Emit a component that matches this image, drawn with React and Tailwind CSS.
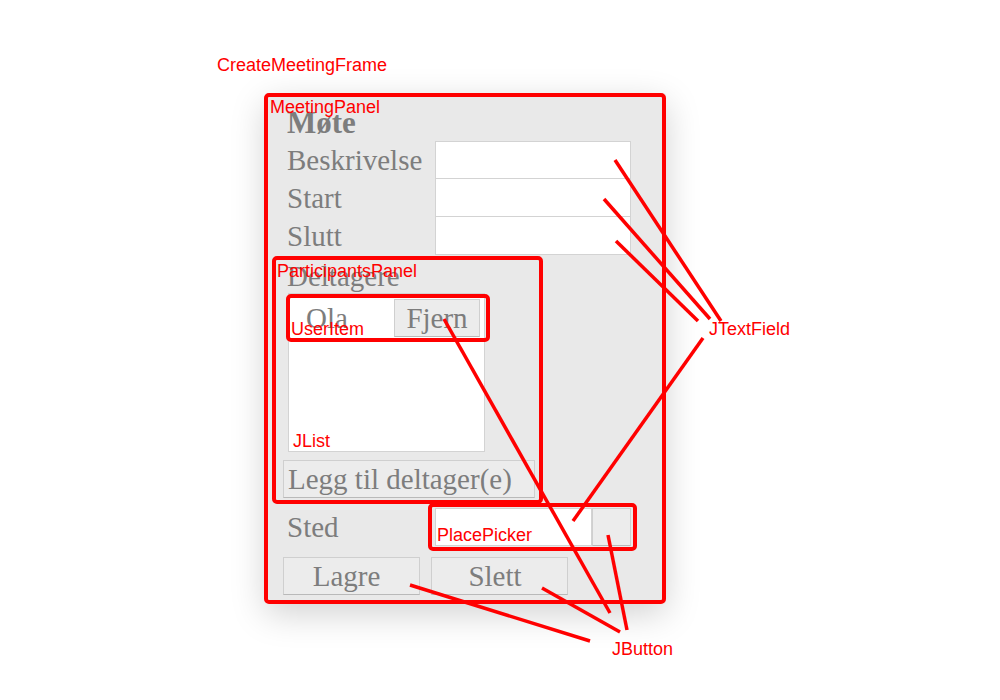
const serif = { fontFamily: '"Liberation Serif", "DejaVu Serif", serif' }

function Field({ className = '' }) {
  return <div className={`h-[38px] bg-white border border-[#d3d3d3] ${className}`} />
}

function Btn({ children, className = '' }) {
  return (
    <button
      type="button"
      className={`h-[38px] bg-[#ececec] border border-[#cfcfcf] border-b-[#b9b9b9] text-[29px] leading-none text-[#7d7d7d] ${className}`}
    >
      {children}
    </button>
  )
}

function Annotations() {
  const red = '#ff0000'
  const boxes = [
    [266, 95, 398, 507],
    [274, 258, 267, 244],
    [288, 296, 200, 44],
    [430, 505, 205, 44],
  ]
  const lines = [
    [615, 160, 721, 321],
    [604, 199, 710, 319],
    [616, 241, 698, 321],
    [703, 338, 573, 521],
    [444, 319, 610, 613],
    [410, 585, 590, 641],
    [542, 588, 620, 632],
    [608, 535, 627, 630],
  ]
  const labels = [
    ['CreateMeetingFrame', 217, 71],
    ['MeetingPanel', 270, 113],
    ['ParticipantsPanel', 277, 277],
    ['UserItem', 291, 335],
    ['JList', 293, 447],
    ['PlacePicker', 437, 541],
    ['JTextField', 709, 335],
    ['JButton', 612, 655],
  ]
  return (
    <svg className="absolute inset-0 pointer-events-none" width="1000" height="700">
      {boxes.map(([x, y, w, h], i) => (
        <rect key={i} x={x} y={y} width={w} height={h} rx="3" fill="none" stroke={red} strokeWidth="4" />
      ))}
      {lines.map(([x1, y1, x2, y2], i) => (
        <line key={i} x1={x1} y1={y1} x2={x2} y2={y2} stroke={red} strokeWidth="3.5" />
      ))}
      {labels.map(([t, x, y]) => (
        <text key={t} x={x} y={y} fill={red} fontSize="18" fontFamily='"Liberation Sans", Arial, sans-serif'>
          {t}
        </text>
      ))}
    </svg>
  )
}

export default function App() {
  return (
    <div className="relative w-[1000px] h-[700px] bg-white overflow-hidden">
      <div
        className="ml-[265px] mt-[93px] w-[401px] h-[511px] bg-[#e9e9e9] rounded-[3px] shadow-[0_10px_35px_rgba(0,0,0,0.18)] pl-[22px] pt-[14px] text-[#7d7d7d]"
        style={serif}
      >
        <div className="h-[34px] text-[31px] font-bold leading-[32px]">Møte</div>

        <div className="grid grid-cols-[148px_196px] text-[29px] leading-[38px]">
          <div className="h-[38px]">Beskrivelse</div>
          <Field />
          <div className="h-[38px]">Start</div>
          <Field className="border-t-0" />
          <div className="h-[38px]">Slutt</div>
          <Field className="border-t-0" />
        </div>

        <div className="h-[38px] flex items-end pb-[2px] text-[29px] leading-none">Deltagere</div>

        <div className="ml-[1px] w-[197px] h-[159px] bg-white border border-[#d3d3d3]">
          <div className="flex items-center pt-[5px] pr-[4px]">
            <span className="ml-[17px] text-[29px] leading-none">Ola</span>
            <Btn className="ml-auto w-[86px] h-[36px]">Fjern</Btn>
          </div>
        </div>

        <Btn className="mt-[8px] -ml-[4px] w-[252px] text-left pl-[4px]">Legg til deltager(e)</Btn>

        <div className="mt-[10px] grid grid-cols-[148px_196px] text-[29px] leading-[38px]">
          <div className="h-[38px]">Sted</div>
          <div className="flex h-[38px]">
            <Field className="w-[157px]" />
            <Btn className="w-[39px]" />
          </div>
        </div>

        <div className="mt-[11px] -ml-[4px] flex gap-[11px]">
          <Btn className="w-[137px] pr-[10px]">Lagre</Btn>
          <Btn className="w-[137px] pr-[9px]">Slett</Btn>
        </div>
      </div>
      <Annotations />
    </div>
  )
}
